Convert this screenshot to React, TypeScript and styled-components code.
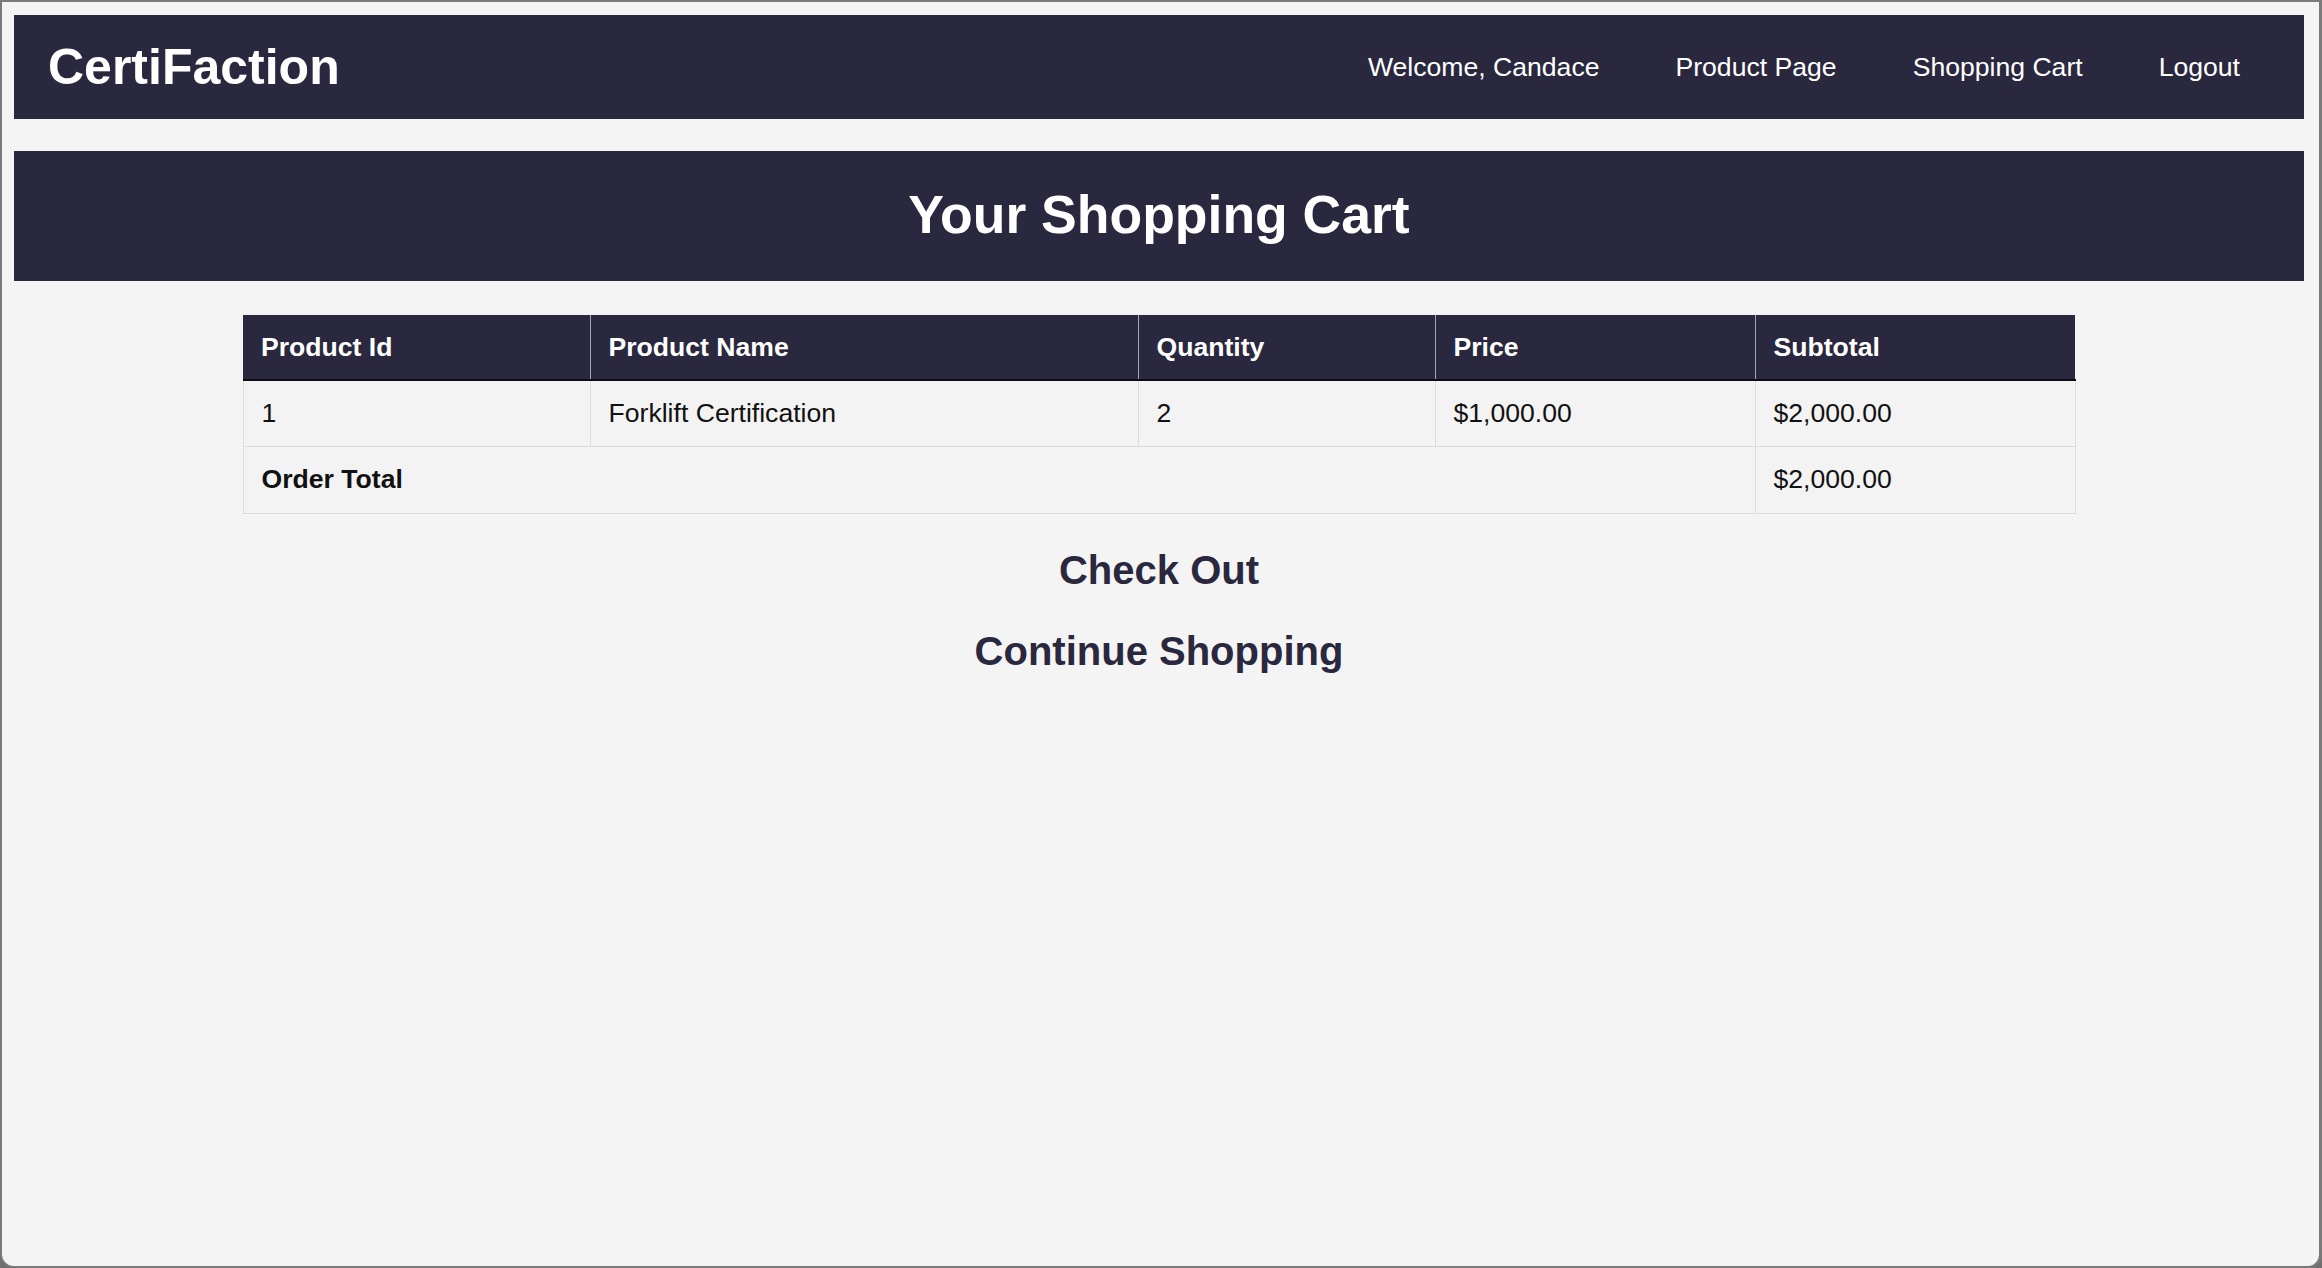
import React from 'react';
import styled, { createGlobalStyle } from 'styled-components';

const GlobalStyle = createGlobalStyle`
  html, body {
    margin: 0;
    padding: 0;
    background: #6f6f6f;
    overflow: hidden;
  }
  body {
    font-family: "Liberation Sans", Arial, sans-serif;
  }
`;

const navy = '#2a283e';

type CartItem = {
  id: number;
  name: string;
  quantity: number;
  price: number;
};

const cart: CartItem[] = [
  { id: 1, name: 'Forklift Certification', quantity: 2, price: 1000 },
];

const money = (n: number) =>
  '$' + n.toLocaleString('en-US', { minimumFractionDigits: 2, maximumFractionDigits: 2 });

const App: React.FC = () => {
  const total = cart.reduce((sum, item) => sum + item.quantity * item.price, 0);

  return (
    <>
      <GlobalStyle />
      <Frame>
        <Nav>
          <Brand>CertiFaction</Brand>
          <NavLinks>
            <NavItem>Welcome, Candace</NavItem>
            <NavItem>Product Page</NavItem>
            <NavItem>Shopping Cart</NavItem>
            <NavItem>Logout</NavItem>
          </NavLinks>
        </Nav>

        <Banner>
          <Title>Your Shopping Cart</Title>
        </Banner>

        <CartTable>
          <colgroup>
            <col style={{ width: 347 }} />
            <col style={{ width: 548 }} />
            <col style={{ width: 297 }} />
            <col style={{ width: 320 }} />
            <col style={{ width: 320 }} />
          </colgroup>
          <thead>
            <HeadRow>
              <Th>Product Id</Th>
              <Th>Product Name</Th>
              <Th>Quantity</Th>
              <Th>Price</Th>
              <Th>Subtotal</Th>
            </HeadRow>
          </thead>
          <tbody>
            {cart.map((item) => (
              <Row key={item.id}>
                <Td>{item.id}</Td>
                <Td>{item.name}</Td>
                <Td>{item.quantity}</Td>
                <Td>{money(item.price)}</Td>
                <Td>{money(item.price * item.quantity)}</Td>
              </Row>
            ))}
            <Row $tall>
              <Td colSpan={4} $bold>Order Total</Td>
              <Td>{money(total)}</Td>
            </Row>
          </tbody>
        </CartTable>

        <Actions>
          <ActionLink href="#">Check Out</ActionLink>
          <ActionLink href="#">Continue Shopping</ActionLink>
        </Actions>
      </Frame>
    </>
  );
};

export default App;

const Frame = styled.div`
  box-sizing: border-box;
  width: 2322px;
  height: 1268px;
  background: #f4f4f4;
  border: 2px solid #7a7a7a;
  border-right-width: 3px;
  border-radius: 0 0 14px 14px;
  padding: 13px 15px 0 12px;
  display: flex;
  flex-direction: column;
`;

const Nav = styled.nav`
  box-sizing: border-box;
  height: 104px;
  background: ${navy};
  display: flex;
  align-items: center;
  justify-content: space-between;
  padding: 0 64px 0 34px;
`;

const Brand = styled.div`
  color: #fff;
  font-size: 50px;
  font-weight: 700;
`;

const NavLinks = styled.div`
  display: flex;
  gap: 76px;
`;

const NavItem = styled.a`
  color: #fff;
  font-size: 26.6px;
  text-decoration: none;
`;

const Banner = styled.header`
  margin-top: 32px;
  height: 130px;
  background: ${navy};
  display: flex;
  align-items: center;
  justify-content: center;
`;

const Title = styled.h1`
  margin: 0 0 4px;
  color: #fff;
  font-size: 53.5px;
  font-weight: 700;
`;

const CartTable = styled.table`
  margin: 34px auto 0;
  width: 1832px;
  table-layout: fixed;
  border-collapse: collapse;
  font-size: 26.6px;
  color: #111;
`;

const HeadRow = styled.tr`
  height: 65px;
  background: ${navy};
`;

const Th = styled.th`
  text-align: left;
  padding: 0 18px;
  color: #fff;
  font-weight: 700;
  border-left: 1px solid #a6a6b0;
  border-bottom: 2px solid #0d0c14;
  &:first-child {
    border-left: none;
  }
`;

const Row = styled.tr<{ $tall?: boolean }>`
  height: ${(p) => (p.$tall ? 67 : 66)}px;
  background: #f3f3f3;
`;

const Td = styled.td<{ $bold?: boolean }>`
  padding: 0 18px;
  border: 1.5px solid #dcdcdc;
  font-weight: ${(p) => (p.$bold ? 700 : 400)};
`;

const Actions = styled.div`
  margin-top: 33px;
  display: flex;
  flex-direction: column;
  align-items: center;
  gap: 35px;
`;

const ActionLink = styled.a`
  color: ${navy};
  font-size: 40px;
  font-weight: 700;
  line-height: 46px;
  text-decoration: none;
`;
